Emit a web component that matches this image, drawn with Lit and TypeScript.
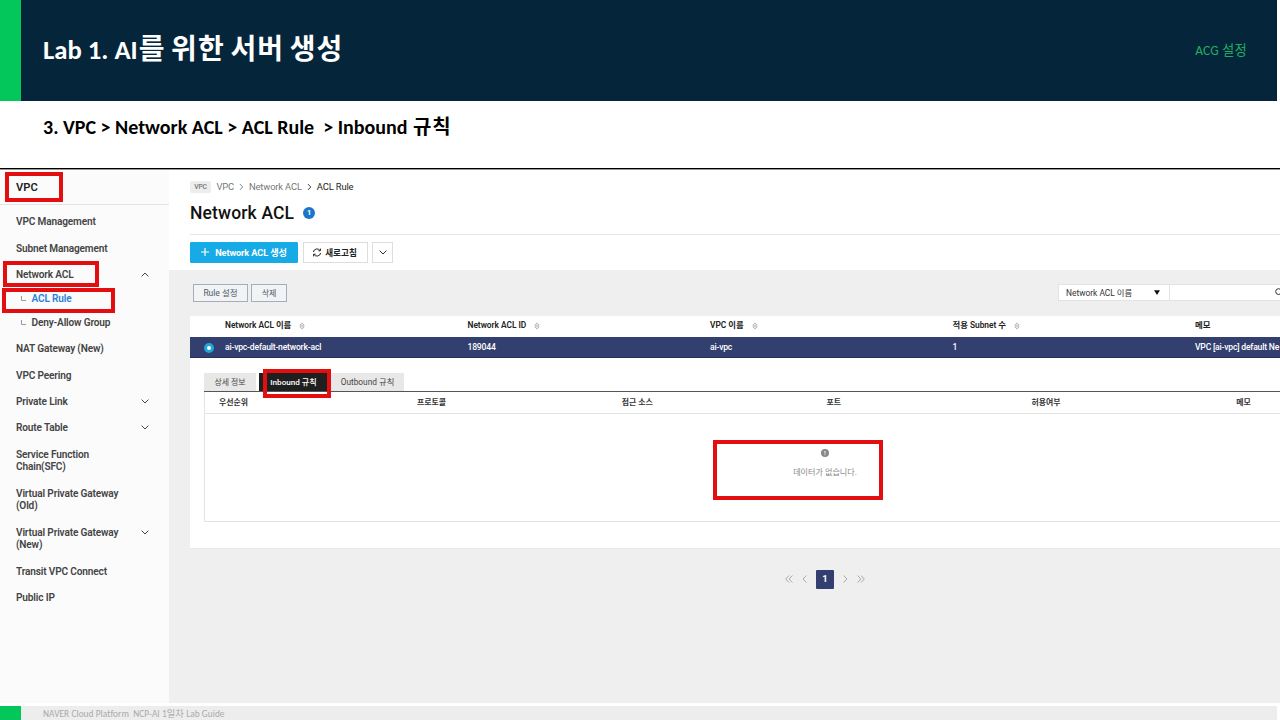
import { LitElement, html, css, svg } from "lit";
import { customElement, property } from "lit/decorators.js";
import { classMap } from "lit/directives/class-map.js";

type IconName = "up" | "down" | "left" | "right" | "first" | "last" | "sort" | "plus" | "refresh" | "caret" | "search" | "branch" | "alert";

const shapes: Record<IconName, { w: number; h: number; body: unknown }> = {
  up: { w: 8, h: 5, body: svg`<path d="M.6 4.4 4 1l3.4 3.4"/>` },
  down: { w: 8, h: 5, body: svg`<path d="M.6.6 4 4 7.4.6"/>` },
  left: { w: 5, h: 8, body: svg`<path d="M4.4.5 1 4l3.4 3.5"/>` },
  right: { w: 5, h: 8, body: svg`<path d="M.6.5 4 4 .6 7.5"/>` },
  first: { w: 8, h: 8, body: svg`<path d="M4 .5.7 4 4 7.5M7.4.5 4.1 4l3.3 3.5"/>` },
  last: { w: 8, h: 8, body: svg`<path d="M.6.5 3.9 4 .6 7.5M4 .5 7.3 4 4 7.5"/>` },
  sort: { w: 6, h: 8, body: svg`<path d="M.8 3.2 3 .9l2.2 2.3zM.8 4.8 3 7.1l2.2-2.3z" stroke-width=".8"/>` },
  plus: { w: 8, h: 8, body: svg`<path d="M4 0v8M0 4h8" stroke-width="1.2"/>` },
  refresh: { w: 10, h: 9, body: svg`<path d="M1.4 4A3.6 3.6 0 0 1 8 2.6M8.6 5A3.6 3.6 0 0 1 2 6.4M8.4.6v2.2H6.4M1.6 8.4V6.2h2"/>` },
  caret: { w: 6, h: 5, body: svg`<path d="M0 .3h6L3 5z" fill="currentColor" stroke="none"/>` },
  search: { w: 9, h: 9, body: svg`<circle cx="3.6" cy="3.6" r="2.9"/><path d="m5.8 5.8 2.6 2.6"/>` },
  branch: { w: 5, h: 5, body: svg`<path d="M.5 0v4.5H5"/>` },
  alert: { w: 8, h: 8, body: svg`<circle cx="4" cy="4" r="4" fill="currentColor" stroke="none"/><path d="M4 1.9v2.5M4 5.2v.9" stroke="#fff"/>` },
};

@customElement("ui-icon")
class UiIcon extends LitElement {
  @property() name: IconName = "down";
  static styles = css`
    :host { display: inline-flex; flex: none; }
    svg { display: block; fill: none; stroke: currentColor; stroke-width: 1; }
  `;
  render() {
    const s = shapes[this.name];
    return html`<svg width=${s.w} height=${s.h} viewBox="0 0 ${s.w} ${s.h}">${s.body}</svg>`;
  }
}

interface MenuItem { label: string; arrow?: IconName; children?: { label: string; active?: boolean }[] }

const menu: MenuItem[] = [
  { label: "VPC Management" },
  { label: "Subnet Management" },
  { label: "Network ACL", arrow: "up", children: [{ label: "ACL Rule", active: true }, { label: "Deny-Allow Group" }] },
  { label: "NAT Gateway (New)" },
  { label: "VPC Peering" },
  { label: "Private Link", arrow: "down" },
  { label: "Route Table", arrow: "down" },
  { label: "Service Function\nChain(SFC)" },
  { label: "Virtual Private Gateway\n(Old)" },
  { label: "Virtual Private Gateway\n(New)", arrow: "down" },
  { label: "Transit VPC Connect" },
  { label: "Public IP" },
];

@customElement("side-menu")
class SideMenu extends LitElement {
  static styles = css`
    :host { display: block; width: 169px; flex: none; background: #fbfbfb; color: #444; font-weight: 600; }
    .head { height: 35px; box-sizing: border-box; border-bottom: 1px solid #e3e3e3; padding: 1px 16px 0; display: flex; align-items: center; font-size: 11.2px; font-weight: 600; color: #222; }
    .list { padding-top: 4.4px; }
    .item { display: flex; justify-content: space-between; padding: 6.97px 20.5px 6.97px 16px; font-size: 10.1px; letter-spacing: -.16px; line-height: 12.5px; white-space: pre; }
    .item ui-icon { padding-top: 3px; color: #444; }
    .sub { margin: -2.4px 0 2.2px; }
    .child { height: 23.8px; display: flex; align-items: center; padding-left: 21px; gap: 5.5px; font-size: 10.1px; letter-spacing: -.16px; }
    .child ui-icon { color: #999; }
    .active { color: #2a7fdc; }
  `;
  render() {
    return html`
      <div class="head">VPC</div>
      <div class="list">
        ${menu.map((m) => html`
          <div class="item"><span>${m.label}</span>${m.arrow ? html`<ui-icon name=${m.arrow}></ui-icon>` : ""}</div>
          ${m.children ? html`<div class="sub">${m.children.map((c) => html`
            <div class="child"><ui-icon name="branch"></ui-icon><span class=${classMap({ active: !!c.active })}>${c.label}</span></div>`)}</div>` : ""}
        `)}
      </div>`;
  }
}

const columns = [
  { head: "Network ACL 이름", value: "ai-vpc-default-network-acl", sort: true },
  { head: "Network ACL ID", value: "189044", sort: true },
  { head: "VPC 이름", value: "ai-vpc", sort: true },
  { head: "적용 Subnet 수", value: "1", sort: true },
  { head: "메모", value: "VPC [ai-vpc] default Ne", sort: false },
];
const ruleColumns = ["우선순위", "프로토콜", "접근 소스", "포트", "허용여부", "메모"];

@customElement("acl-console")
class AclConsole extends LitElement {
  static styles = css`
    :host { display: flex; flex-direction: column; flex: 1; min-width: 0; background: #efefef; color: #333; font-size: 8.4px; overflow: hidden; white-space: nowrap; }
    .top { background: #fff; height: 100px; flex: none; padding-left: 21px; box-sizing: border-box; }
    .crumbs { display: flex; align-items: center; height: 13px; padding-top: 10px; font-size: 9.4px; letter-spacing: -.16px; color: #777; }
    .chip { background: #ededed; border-radius: 2px; font-size: 6.8px; font-weight: 500; width: 21px; height: 12px; line-height: 12px; text-align: center; margin-right: 5.5px; }
    .sep { margin: 0 5px; transform: scale(.85); }
    .here { color: #222; }
    .heading { display: flex; align-items: center; gap: 9px; height: 37px; padding-top: 1px; font-size: 17.5px; font-weight: 500; color: #111; letter-spacing: .15px; }
    .count { width: 12px; height: 12px; border-radius: 50%; background: #1b76cb; color: #fff; font-size: 7.5px; line-height: 12px; font-weight: 700; text-align: center; letter-spacing: 0; }
    .actions { border-top: 1px solid #e6e6e6; margin-top: 3px; padding-top: 7px; display: flex; gap: 4.5px; }
    .btn { display: flex; align-items: center; justify-content: center; box-sizing: border-box; height: 21px; border: 1px solid #ddd; background: #fff; font-weight: 500; }
    .create { width: 108px; background: #16aae6; border-color: #16aae6; color: #fff; gap: 6px; font-weight: 700; font-size: 9.2px; letter-spacing: -.12px; border-radius: 1px; padding-bottom: 1px; }
    .refresh { width: 65px; gap: 3px; font-weight: 700; color: #222; font-size: 8.6px; padding: 0 1px 1px 0; }
    .more { width: 21px; }
    .tools { height: 46px; flex: none; display: flex; align-items: center; padding: 0 0 1px 24px; box-sizing: border-box; }
    .flat { display: flex; align-items: center; justify-content: center; box-sizing: border-box; height: 18px; border: 1px solid #a4adba; color: #4c5969; background: #f2f3f5; margin-right: 3px; font-size: 8.5px; padding-bottom: 1px; }
    .rule { width: 55px; } .del { width: 36px; font-size: 8px; }
    .filter { margin-left: auto; display: flex; background: #fff; height: 17px; width: 222px; border: 1px solid #e3e3e3; border-right: 0; box-sizing: border-box; }
    .select { width: 111px; display: flex; align-items: center; justify-content: space-between; padding: 0 9px 1px 7px; box-sizing: border-box; border-right: 1px solid #e3e3e3; color: #333; }
    .select ui-icon { color: #111; padding-top: 1px; }
    .query { flex: 1; display: flex; align-items: center; justify-content: flex-end; margin-right: -4px; }
    .card { margin-left: 21px; background: #fff; height: 233px; flex: none; border-bottom: 1px solid #e7e7e7; box-sizing: border-box; }
    .row { display: grid; grid-template-columns: 35px repeat(5, 242.5px); align-items: center; }
    .row.picked { grid-template-columns: 35px repeat(4, 242.5px) auto; }
    .head { height: 21px; padding-bottom: 3px; box-sizing: border-box; font-weight: 600; color: #222; font-size: 8.4px; line-height: 12px; letter-spacing: -.03px; }
    .cell { display: flex; align-items: center; gap: 8px; }
    .cell ui-icon { color: #aaa; padding-top: 1px; }
    .picked { height: 21px; background: #33406f; color: #fff; border-bottom: 1px solid #273256; box-sizing: border-box; font-size: 8.6px; letter-spacing: -.2px; font-weight: 500; }
    .radio { box-sizing: border-box; width: 10px; height: 10px; border-radius: 50%; background: #fff; border: 3px solid #20a5dd; margin: 1px 0 0 14px; }
    .detail { margin: 15px 0 0 14px; }
    .tabs { display: flex; height: 19px; gap: 3px; border-bottom: 1px solid #555; box-sizing: border-box; }
    .tab { background: #e8e8e8; display: flex; align-items: center; justify-content: center; color: #444; font-size: 8.3px; padding-bottom: 2px; box-sizing: border-box; }
    .info { width: 52px; font-size: 7.9px; } .in { width: 69px; background: #1f1f1f; color: #fff; font-weight: 500; font-size: 8.1px; } .out { width: 73px; }
    .rules { border-left: 1px solid #e3e3e3; border-bottom: 1px solid #e3e3e3; height: 130px; box-sizing: border-box; }
    .titles { display: grid; grid-template-columns: 198px repeat(5, 204.8px); padding: 0 0 2px 14px; height: 22px; align-items: center; border-bottom: 1px solid #e3e3e3; box-sizing: border-box; font-size: 7.9px; font-weight: 700; }
    .empty { width: 1240px; display: flex; flex-direction: column; align-items: center; padding-top: 35px; gap: 9px; color: #888; font-size: 8.1px; line-height: 12px; }
    .empty ui-icon { color: #888; }
    .pager { display: flex; justify-content: center; align-items: center; width: 1312px; padding-top: 21px; color: #aaa; }
    .pager ui-icon { padding-bottom: 1px; }
    .page { width: 18px; height: 19px; border-radius: 1px; line-height: 18px; background: #33406f; color: #fff; font-weight: 700; font-size: 9.5px; text-align: center; }
    .wide { margin: 0 9px; }
  `;
  render() {
    return html`
      <div class="top">
        <div class="crumbs"><span class="chip">VPC</span>VPC<ui-icon class="sep" name="right"></ui-icon>Network ACL<ui-icon class="sep here" name="right"></ui-icon><span class="here">ACL Rule</span></div>
        <div class="heading">Network ACL<span class="count">1</span></div>
        <div class="actions">
          <div class="btn create"><ui-icon name="plus"></ui-icon>Network ACL 생성</div>
          <div class="btn refresh"><ui-icon name="refresh"></ui-icon>새로고침</div>
          <div class="btn more"><ui-icon name="down"></ui-icon></div>
        </div>
      </div>
      <div class="tools">
        <div class="flat rule">Rule 설정</div><div class="flat del">삭제</div>
        <div class="filter"><div class="select">Network ACL 이름<ui-icon name="caret"></ui-icon></div><div class="query"><ui-icon name="search"></ui-icon></div></div>
      </div>
      <div class="card">
        <div class="row head"><span></span>${columns.map((c) => html`<span class="cell">${c.head}${c.sort ? html`<ui-icon name="sort"></ui-icon>` : ""}</span>`)}</div>
        <div class="row picked"><span class="radio"></span>${columns.map((c) => html`<span>${c.value}</span>`)}</div>
        <div class="detail">
          <div class="tabs"><div class="tab info">상세 정보</div><div class="tab in">Inbound 규칙</div><div class="tab out">Outbound 규칙</div></div>
          <div class="rules">
            <div class="titles">${ruleColumns.map((c) => html`<span>${c}</span>`)}</div>
            <div class="empty"><ui-icon name="alert"></ui-icon><span>데이터가 없습니다.</span></div>
          </div>
        </div>
      </div>
      <div class="pager"><ui-icon name="first"></ui-icon><ui-icon name="left" class="wide"></ui-icon><span class="page">1</span><ui-icon name="right" class="wide"></ui-icon><ui-icon name="last"></ui-icon></div>`;
  }
}

@customElement("app-root")
class AppRoot extends LitElement {
  static styles = css`
    :host { display: flex; flex-direction: column; position: relative; width: 1280px; height: 720px; overflow: hidden; background: #fff; font-family: Roboto, "Noto Sans CJK KR", sans-serif; }
    .banner { height: 101px; flex: none; width: 1277px; box-sizing: border-box; background: #05253b; border-left: 21px solid #03c75a; display: flex; justify-content: space-between; align-items: center; padding: 0 30px 0 22px; }
    .banner, .step, .foot { font-family: Carlito, Lato, "Noto Sans CJK KR", sans-serif; white-space: pre; }
    .title { font-size: 26.67px; font-weight: 700; color: #fff; line-height: 40px; padding-bottom: 2px; }
    .title .ko { font-size: 28px; letter-spacing: 1.15px; word-spacing: -2px; line-height: 1; margin-left: 1px; }
    .topic { color: #1fae62; font-size: 13.33px; letter-spacing: .2px; line-height: 20px; }
    .step { flex: none; border-bottom: 1px solid #000; padding: 10px 0 0 43px; height: 57px; font-size: 20px; font-weight: 700; color: #000; line-height: 32px; }
    .step .ko { font-size: 20px; letter-spacing: 1px; line-height: 1; margin-left: 1px; }
    .capture { height: 534px; flex: none; display: flex; border-top: 1px solid #999; box-sizing: border-box; }
    .foot { margin-top: 3px; height: 14px; width: 1277px; box-sizing: border-box; border-left: 21px solid #03c75a; background: #ededed; padding-left: 22px; font-size: 9.33px; letter-spacing: .06px; line-height: 16px; color: #aaa; overflow: hidden; }
    .mark { position: absolute; box-sizing: border-box; border: 4px solid #e20e10; }
    .m1 { left: 5px; top: 172px; width: 58px; height: 30px; }
    .m2 { left: 3px; top: 261px; width: 96px; height: 26px; }
    .m3 { left: 2px; top: 288px; width: 113px; height: 25px; }
    .m4 { left: 263px; top: 369px; width: 68px; height: 29px; }
    .m5 { left: 713px; top: 440px; width: 170px; height: 60px; }
  `;
  render() {
    return html`
      <div class="banner"><div class="title">Lab 1. AI<span class="ko">를 위한 서버 생성</span></div><div class="topic">ACG 설정</div></div>
      <div class="step">3. VPC &gt; Network ACL &gt; ACL Rule  &gt; Inbound <span class="ko">규칙</span></div>
      <div class="capture"><side-menu></side-menu><acl-console></acl-console></div>
      <div class="foot">NAVER Cloud Platform  NCP-AI 1일차 Lab Guide</div>
      ${[1, 2, 3, 4, 5].map((n) => html`<div class="mark m${n}"></div>`)}`;
  }
}
